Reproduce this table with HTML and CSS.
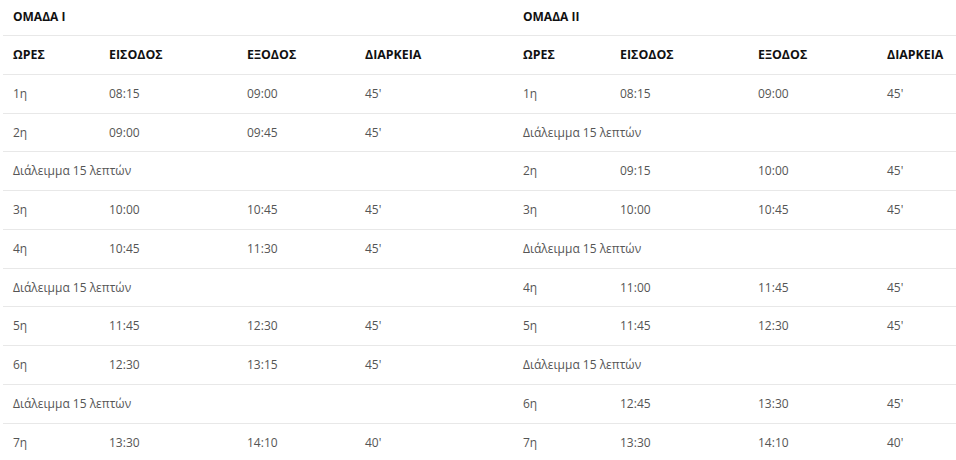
FILE: index.html
```html
<!DOCTYPE html>
<html lang="el">
<head>
<meta charset="utf-8">
<link rel="stylesheet" href="styles.css">
</head>
<body>
<div class="wrap">
  <section class="group group-1">
    <div class="title">ΟΜΑΔΑ I</div>
    <table class="sched">
      <colgroup><col class="c1"><col class="c2"><col class="c3"><col></colgroup>
      <thead><tr><th>ΩΡΕΣ</th><th>ΕΙΣΟΔΟΣ</th><th>ΕΞΟΔΟΣ</th><th>ΔΙΑΡΚΕΙΑ</th></tr></thead>
      <tbody>
        <tr><td>1η</td><td>08:15</td><td>09:00</td><td>45'</td></tr>
        <tr><td>2η</td><td>09:00</td><td>09:45</td><td>45'</td></tr>
        <tr><td colspan="4">Διάλειμμα 15 λεπτών</td></tr>
        <tr><td>3η</td><td>10:00</td><td>10:45</td><td>45'</td></tr>
        <tr><td>4η</td><td>10:45</td><td>11:30</td><td>45'</td></tr>
        <tr><td colspan="4">Διάλειμμα 15 λεπτών</td></tr>
        <tr><td>5η</td><td>11:45</td><td>12:30</td><td>45'</td></tr>
        <tr><td>6η</td><td>12:30</td><td>13:15</td><td>45'</td></tr>
        <tr><td colspan="4">Διάλειμμα 15 λεπτών</td></tr>
        <tr><td>7η</td><td>13:30</td><td>14:10</td><td>40'</td></tr>
      </tbody>
    </table>
  </section>
  <section class="group group-2">
    <div class="title">ΟΜΑΔΑ II</div>
    <table class="sched">
      <colgroup><col class="c1"><col class="c2"><col class="c3"><col></colgroup>
      <thead><tr><th>ΩΡΕΣ</th><th>ΕΙΣΟΔΟΣ</th><th>ΕΞΟΔΟΣ</th><th>ΔΙΑΡΚΕΙΑ</th></tr></thead>
      <tbody>
        <tr><td>1η</td><td>08:15</td><td>09:00</td><td>45'</td></tr>
        <tr><td colspan="4">Διάλειμμα 15 λεπτών</td></tr>
        <tr><td>2η</td><td>09:15</td><td>10:00</td><td>45'</td></tr>
        <tr><td>3η</td><td>10:00</td><td>10:45</td><td>45'</td></tr>
        <tr><td colspan="4">Διάλειμμα 15 λεπτών</td></tr>
        <tr><td>4η</td><td>11:00</td><td>11:45</td><td>45'</td></tr>
        <tr><td>5η</td><td>11:45</td><td>12:30</td><td>45'</td></tr>
        <tr><td colspan="4">Διάλειμμα 15 λεπτών</td></tr>
        <tr><td>6η</td><td>12:45</td><td>13:30</td><td>45'</td></tr>
        <tr><td>7η</td><td>13:30</td><td>14:10</td><td>40'</td></tr>
      </tbody>
    </table>
  </section>
</div>
</body>
</html>
```

FILE: styles.css
```css
html, body {
  margin: 0;
  padding: 0;
  background: #fff;
}
body {
  font-family: "Open Sans", "Noto Sans", sans-serif;
  font-size: 12px;
  color: #555;
  overflow: hidden;
}
.wrap {
  display: flex;
  padding-left: 3px;
  width: 956px;
  box-sizing: border-box;
  overflow: hidden;
}
.group-1 { width: 510px; flex: none; }
.group-2 { width: 443px; flex: none; }
.title {
  height: 35px;
  line-height: 33px;
  padding-left: 10px;
  font-weight: 700;
  color: #111;
  border-bottom: 1px solid #e8e8e8;
}
.sched {
  width: 100%;
  border-collapse: collapse;
  table-layout: fixed;
}
.group-1 .c1 { width: 96px; }
.group-1 .c2 { width: 138px; }
.group-1 .c3 { width: 118px; }
.group-2 .c1 { width: 97px; }
.group-2 .c2 { width: 138px; }
.group-2 .c3 { width: 129px; }
.sched th, .sched td {
  text-align: left;
  padding: 10px;
  line-height: 17.75px;
  border-bottom: 1px solid #e8e8e8;
  white-space: nowrap;
}
.sched th {
  font-weight: 700;
  font-size: 12.4px;
  color: #111;
}
```
